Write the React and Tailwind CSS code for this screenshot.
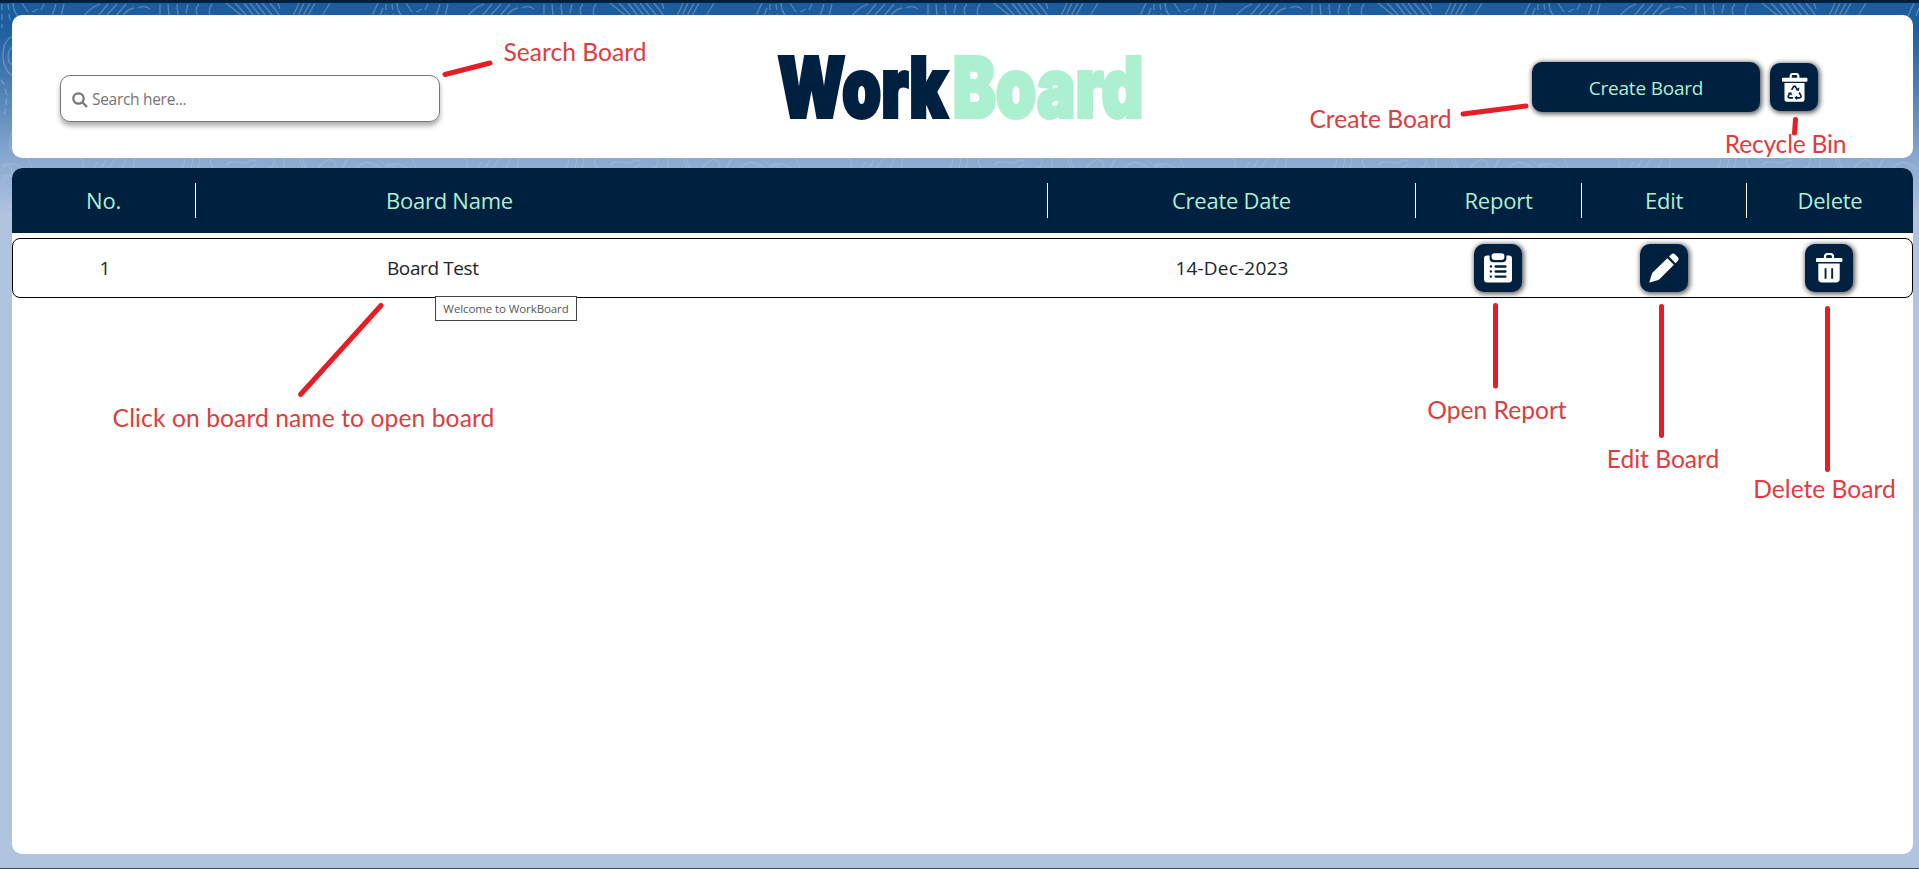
const ui = "font-['Open_Sans',sans-serif]";

function Contours() {
  return (
    <svg className="absolute inset-0 h-[260px] w-full" fill="none">
      <defs>
        <pattern id="topo" width="384" height="260" patternUnits="userSpaceOnUse" x="0" y="0">
          <g stroke="#a9c6e6" strokeOpacity="0.4" strokeWidth="1.3">
            <path d="M13 3C13 12 18 18 26 22M22 3L28 12M32 12L38 9M44 4L41 10" />
            <path d="M56 4L52 16M64 4L61 16M100 4Q90 8 84 16M108 4L98 16M117 4L106 16M126 4L116 16M134 8Q126 10 123 16M138 8Q144 5 150 9" />
            <path d="M160 4V16M168 4L169 16M177 4L178 16M188 4L186 13M197 16Q195 8 199 4M210 16Q208 9 212 4" />
            <path d="M226 3L242 16M235 3L247 16M244 3L254 16M250 3L260 16M256 3L266 16M262 3L273 16M270 3L280 16M278 3L280 9" />
            <path d="M299 3L293 16M304 3L298 16M310 3L303 16M315 3L308 16M330 3L322 16M372 16L378 3M380 16L383 8" />
            <path d="M13 36C0 42 1 62 8 72L13 76M13 46Q6 52 9 62L13 66M12 132Q8 140 11 150" />
            <path d="M2 4V28M8 4L10 22M1 80C8 88 8 104 3 118" strokeDasharray="6 4" />
            <path d="M0 166Q14 160 24 169M28 158L32 168M2 168C8 162 14 168 12 176M4 182C2 174 12 174 13 180" />
            <path d="M79 158C88 162 82 166 82 170M97 162L94 168M106 160L101 168M116 158L108 168M126 158L122 168M135 158L133 168" />
            <path d="M184 158Q186 164 181 169M192 158Q194 164 190 169M200 158L198 169M212 158Q207 164 215 169" />
            <path d="M226 165C232 158 240 165 248 162C256 157 260 164 250 168M268 169Q276 165 274 158M284 158V169M299 158L303 169M302 158L306 169" />
            <path d="M318 169Q324 158 332 160Q338 163 334 169M348 158L342 169M356 169Q366 156 382 169" />
          </g>
        </pattern>
      </defs>
      <rect width="100%" height="260" fill="url(#topo)" />
    </svg>
  );
}

function TrashLid() {
  return (
    <>
      <path d="M10 6V3.6Q10 1 12.6 1h2.8Q18 1 18 3.6V6" fill="none" stroke="currentColor" strokeWidth="2.2" />
      <rect x="1" y="5" width="26.4" height="4.1" rx="1.2" />
    </>
  );
}

function TrashIcon() {
  return (
    <svg viewBox="0 0 28 30" className="h-[30px] w-7" fill="currentColor">
      <TrashLid />
      <path fillRule="evenodd" d="M3.3 10.4h21.4v15.4q0 3.8-3.8 3.8H7.1q-3.8 0-3.8-3.8zM9.6 15.2v10.5h1.9V15.2zM16.2 15.2v10.5h1.9V15.2z" />
    </svg>
  );
}

function RecycleIcon() {
  return (
    <svg viewBox="0 0 28 30" className="h-[29px] w-[27px]" fill="currentColor">
      <TrashLid />
      <path d="M3.6 10.4h20.8v17q0 2.3-2.3 2.3H5.9q-2.3 0-2.3-2.3z" />
      <g fill="none" stroke="#00203f" strokeWidth="1.7">
        <path d="M11 17.5l2-3.3q1-1.3 2 0l1.9 3" />
        <path d="M18.8 20.2l1.8 3.2q.7 2-1.3 2.4h-3.6" />
        <path d="M12.4 25.8H8.9q-2-.5-1.2-2.4l1.5-2.6" />
      </g>
      <g fill="#00203f">
        <path d="M14.9 17.6l3.7 1 .5-3.8z" />
        <path d="M16.8 23.2v5l-3-2.5z" />
        <path d="M7 20.8l3.7-1 .9 3.6z" />
      </g>
    </svg>
  );
}

function ReportIcon() {
  return (
    <svg viewBox="0 0 28 30" className="h-[30px] w-7">
      <path fill="currentColor" d="M3 2.6H25q3 0 3 3V26.6q0 3-3 3H3q-3 0-3-3v-21q0-3 3-3z" />
      <rect x="5.6" y="-1" width="16.8" height="10.2" rx="4" fill="#00203f" />
      <rect x="7.6" y="0.2" width="12.8" height="6.8" rx="3" fill="currentColor" />
      <path
        d="M11.6 13.5H21.5M11.6 18.5H21.5M11.6 23.6H21.5M6.8 13.5H7M6.8 18.5H7M6.8 23.6H7"
        stroke="#00203f"
        strokeWidth="2.3"
        strokeLinecap="round"
      />
    </svg>
  );
}

function EditIcon() {
  return (
    <svg viewBox="0 0 30 30" className="size-[30px]" fill="currentColor">
      <path d="M18.3 5.2l6.6 6.6L10.4 26.3Q9.9 26.8 9.2 27L.9 29.5Q.2 29.6.4 28.9L3 20.6q.2-.6.7-1.1z" />
      <path d="M20 3.6l2.1-2.1q2-2 4.3.2L28.6 3.9q2 2.1 0 4.1l-2.1 2.2z" />
    </svg>
  );
}

function IconButton({ children, className = "" }) {
  return (
    <button className={`flex h-12 w-12 items-center justify-center rounded-[10px] bg-[#00203f] text-white shadow-[1px_1px_5px_1px_rgba(0,0,0,0.65)] ${className}`}>
      {children}
    </button>
  );
}

const columns = "grid grid-cols-[184px_852px_368px_166px_165px_1fr]";

function Heading({ children, divider = true, className = "justify-center" }) {
  return (
    <div className={`flex h-[35px] items-center ${divider ? "border-r border-white" : ""} ${className}`}>
      <span>{children}</span>
    </div>
  );
}

const notes = [
  { text: "Search Board", box: "left-[504px] top-[36px] w-[142px]", line: [445, 74.5, 490, 63] },
  { text: "Create Board", box: "left-[1310px] top-[103px] w-[141px]", line: [1463, 114, 1526, 106] },
  { text: "Recycle Bin", box: "left-[1725px] top-[128px] w-[121px] tracking-[-0.2px]", line: [1795.5, 119.5, 1794.5, 133] },
  { text: "Click on board name to open board", box: "left-[113px] top-[402px] w-[381px] tracking-[0.1px]", line: [300.5, 394.5, 381, 305.5] },
  { text: "Open Report", box: "left-[1428px] top-[394px] w-[138px]", line: [1495.5, 305.5, 1495.5, 386] },
  { text: "Edit Board", box: "left-[1607px] top-[443px] w-[112px]", line: [1661.5, 306.5, 1661.5, 435.5] },
  { text: "Delete Board", box: "left-[1754px] top-[473px] w-[141px]", line: [1827.5, 308.5, 1827.5, 469.5] },
];

export default function App() {
  return (
    <div className={`relative h-[869px] w-full overflow-hidden bg-[#b0c4e0] ${ui}`}>
      <div className="absolute inset-0 bg-[linear-gradient(180deg,#195b9b_0px,#1e5f9f_30px,#8aa9d0_160px,#b0c4e0_215px)]" />
      <Contours />
      <div className="relative flex h-full flex-col border-t-[3px] border-b border-t-[#00203f] border-b-[#3d4d57] pt-3 pr-1.5 pb-3.5 pl-3">
        <header className="flex h-[143px] shrink-0 justify-between rounded-[10px] bg-white">
          <div className="w-[620px] pt-[60px] pl-12">
            <div className="flex h-[47px] w-[380px] items-center rounded-[10px] border border-[#767676] pl-[11px] text-[#757575] shadow-[0_4px_5px_rgba(0,0,0,0.32)]">
              <svg viewBox="0 0 16 16" className="mt-0.5 size-4" fill="none" stroke="currentColor" strokeWidth="2.2">
                <circle cx="6.5" cy="6.5" r="5.2" />
                <path d="M10.3 10.3L15 15" />
              </svg>
              <span className="mt-0.5 ml-1 text-[15.5px] tracking-[-0.3px]">Search here...</span>
            </div>
          </div>
          <h1 className="flex h-full w-[370px] items-center pt-[3px] font-[Inter,sans-serif] text-[82px] leading-none font-black text-[#00203f]">
            <span className="w-[175px]">
              <span className="inline-block origin-left scale-x-[0.755] tracking-[0.5px] [-webkit-text-stroke:4px_#00203f]">Work</span>
            </span>
            <span className="w-[190px] text-[#adefd1]">
              <span className="inline-block origin-left scale-x-[0.78] tracking-[0.5px] [-webkit-text-stroke:4px_#adefd1]">Board</span>
            </span>
          </h1>
          <div className="flex w-[620px] justify-end gap-2.5 pt-[47px] pr-[95px]">
            <button className="h-[50px] w-[228px] rounded-[10px] bg-[#00203f] pt-0.5 text-[19px] tracking-[-0.2px] text-[#adefd1] shadow-[1px_1px_5px_1px_rgba(0,0,0,0.65)]">
              Create Board
            </button>
            <IconButton className="mt-px"><RecycleIcon /></IconButton>
          </div>
        </header>
        <main className="mt-2.5 min-h-0 flex-1 overflow-hidden rounded-[10px] bg-white">
          <div className={`${columns} h-[65px] items-center bg-[#00203f] text-[22px] tracking-[-0.25px] text-[#adefd1]`}>
            <Heading>No.</Heading>
            <Heading className="pl-[190px]">Board Name</Heading>
            <Heading>Create Date</Heading>
            <Heading>Report</Heading>
            <Heading>Edit</Heading>
            <Heading divider={false}>Delete</Heading>
          </div>
          <div className={`${columns} mt-[5px] h-[60px] items-center rounded-[8px] border border-black text-[19px] text-[#212529]`}>
            <div className="text-center">1</div>
            <div className="pl-[190px] tracking-[-0.4px]">Board Test</div>
            <div className="pr-0.5 text-center tracking-[0.2px]">14-Dec-2023</div>
            <div className="flex justify-center pr-[5px] pb-px"><IconButton><ReportIcon /></IconButton></div>
            <div className="flex justify-center pr-[3px] pb-px"><IconButton><EditIcon /></IconButton></div>
            <div className="flex justify-center pr-0.5 pb-px"><IconButton><TrashIcon /></IconButton></div>
          </div>
        </main>
      </div>
      <div className="absolute top-[296px] left-[435px] flex h-[25px] w-[142px] items-center justify-center border border-[#444] bg-white text-[11.5px] tracking-[-0.1px] whitespace-nowrap text-[#575757]">
        Welcome to WorkBoard
      </div>
      <svg className="absolute inset-0 h-full w-full" stroke="#e81c24" strokeWidth="5" strokeLinecap="round">
        {notes.map(({ text, line: [x1, y1, x2, y2] }) => (
          <line key={text} x1={x1} y1={y1} x2={x2} y2={y2} />
        ))}
      </svg>
      {notes.map(({ text, box }) => (
        <div key={text} className={`absolute flex h-8 items-center justify-center font-[Lato,sans-serif] text-[24.6px] whitespace-nowrap text-[#e03c40] ${box}`}>
          {text}
        </div>
      ))}
    </div>
  );
}
